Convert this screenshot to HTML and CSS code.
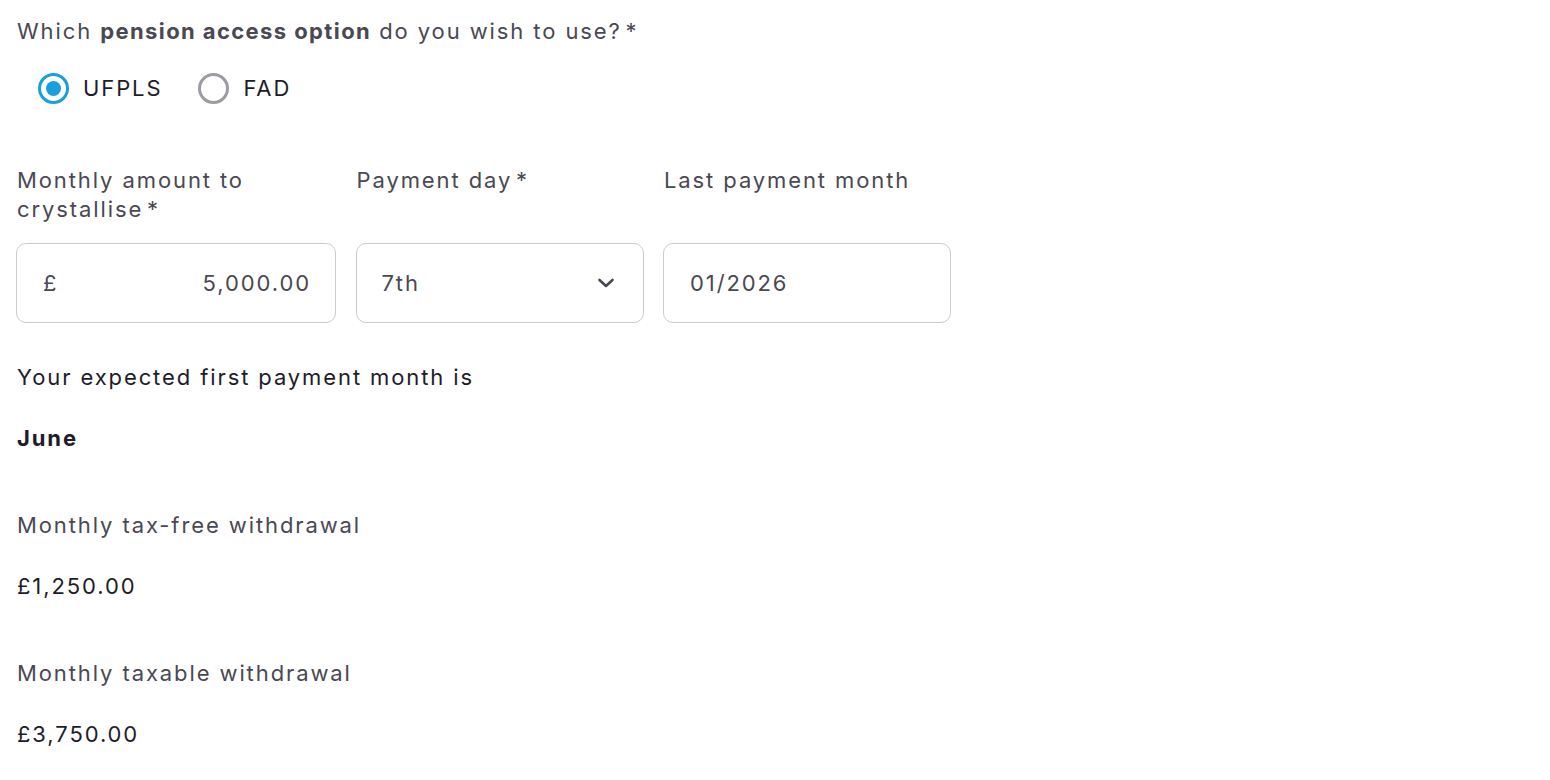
FILE: index.html
```html
<!DOCTYPE html>
<html lang="en">
<head>
  <meta charset="UTF-8">
  <title>Pension access</title>
  <link rel="stylesheet" href="styles.css">
</head>
<body>

  <form class="crystallise">
    <p class="question">Which <strong>pension access option</strong> do you wish to use?&#8202;*</p>

    <div class="radios">
      <label class="radio">
        <input type="radio" name="option" value="ufpls" checked>
        <span class="dot"></span>
        UFPLS
      </label>
      <label class="radio">
        <input type="radio" name="option" value="fad">
        <span class="dot"></span>
        FAD
      </label>
    </div>

    <div class="fields">
      <div class="field">
        <label class="label" for="amount">Monthly amount to crystallise&#8202;*</label>
        <div class="box money">
          <span class="currency">£</span>
          <span class="value" id="amount">5,000.00</span>
        </div>
      </div>
      <div class="field">
        <label class="label" for="day">Payment day&#8202;*</label>
        <div class="box select" id="day">
          <span>7th</span>
          <svg class="chevron" width="18" height="12" viewBox="0 0 18 12">
            <path d="M2.5 3 L9 9 L15.5 3" fill="none" stroke="#4a4853" stroke-width="2.6" stroke-linecap="round" stroke-linejoin="round"/>
          </svg>
        </div>
      </div>
      <div class="field">
        <label class="label" for="last">Last payment month</label>
        <div class="box" id="last">01/2026</div>
      </div>
    </div>

    <div class="result">
      <p class="result-label dark">Your expected first payment month is</p>
      <p class="result-value"><strong>June</strong></p>
    </div>

    <div class="result">
      <p class="result-label">Monthly tax-free withdrawal</p>
      <p class="result-value">£1,250.00</p>
    </div>

    <div class="result">
      <p class="result-label">Monthly taxable withdrawal</p>
      <p class="result-value">£3,750.00</p>
    </div>
  </form>

</body>
</html>
```

FILE: styles.css
```css
:root {
  --text: #4a4853;
  --dark: #1e1c2b;
  --blue: #1b9fdc;
  --ring: #9c9ba1;
  --border: #cbcbcf;
}

body {
  font-family: Inter, 'Open Sans', sans-serif;
  font-size: 22px;
  letter-spacing: 1.9px;
  color: var(--text);
  background: #ffffff;
  margin: 0;
  padding: 0;
}

p {
  margin: 0;
}

.crystallise {
  padding: 16px 16px 0 17px;
}

.question {
  line-height: 30px;
}

.question strong {
  font-weight: 700;
  letter-spacing: 1.4px;
}

.radios {
  display: flex;
  align-items: center;
  gap: 36px;
  margin-top: 27px;
  padding-left: 21px;
}

.radio {
  display: flex;
  align-items: center;
  gap: 14px;
  color: var(--dark);
  line-height: 31px;
  cursor: pointer;
}

.radio input {
  display: none;
}

.dot {
  width: 31px;
  height: 31px;
  border-radius: 50%;
  border: 3px solid var(--ring);
  box-sizing: border-box;
  display: flex;
  align-items: center;
  justify-content: center;
}

.radio input:checked + .dot {
  border-color: var(--blue);
}

.radio input:checked + .dot::after {
  content: '';
  width: 15px;
  height: 15px;
  border-radius: 50%;
  background: var(--blue);
}

.fields {
  display: grid;
  grid-template-columns: 320px 288px 288px;
  column-gap: 19.5px;
  margin-top: 62px;
  margin-left: -1px;
}

.field {
  display: flex;
  flex-direction: column;
}

.label {
  line-height: 29px;
  min-height: 58px;
  padding-left: 1px;
}

.box {
  margin-top: 19px;
  height: 80px;
  box-sizing: border-box;
  border: 1px solid var(--border);
  border-radius: 10px;
  padding: 0 26px;
  display: flex;
  align-items: center;
}

.money {
  justify-content: space-between;
  padding-right: 24px;
}

.select {
  justify-content: space-between;
  padding-left: 25px;
  padding-right: 28px;
}

.result {
  margin-top: 40px;
}

.result + .result {
  margin-top: 58px;
}

.result-label {
  line-height: 29px;
}

.result-label.dark {
  color: var(--dark);
}

.result-value {
  margin-top: 32px;
  line-height: 29px;
  color: var(--dark);
}

.result-value strong {
  font-weight: 700;
}
```
